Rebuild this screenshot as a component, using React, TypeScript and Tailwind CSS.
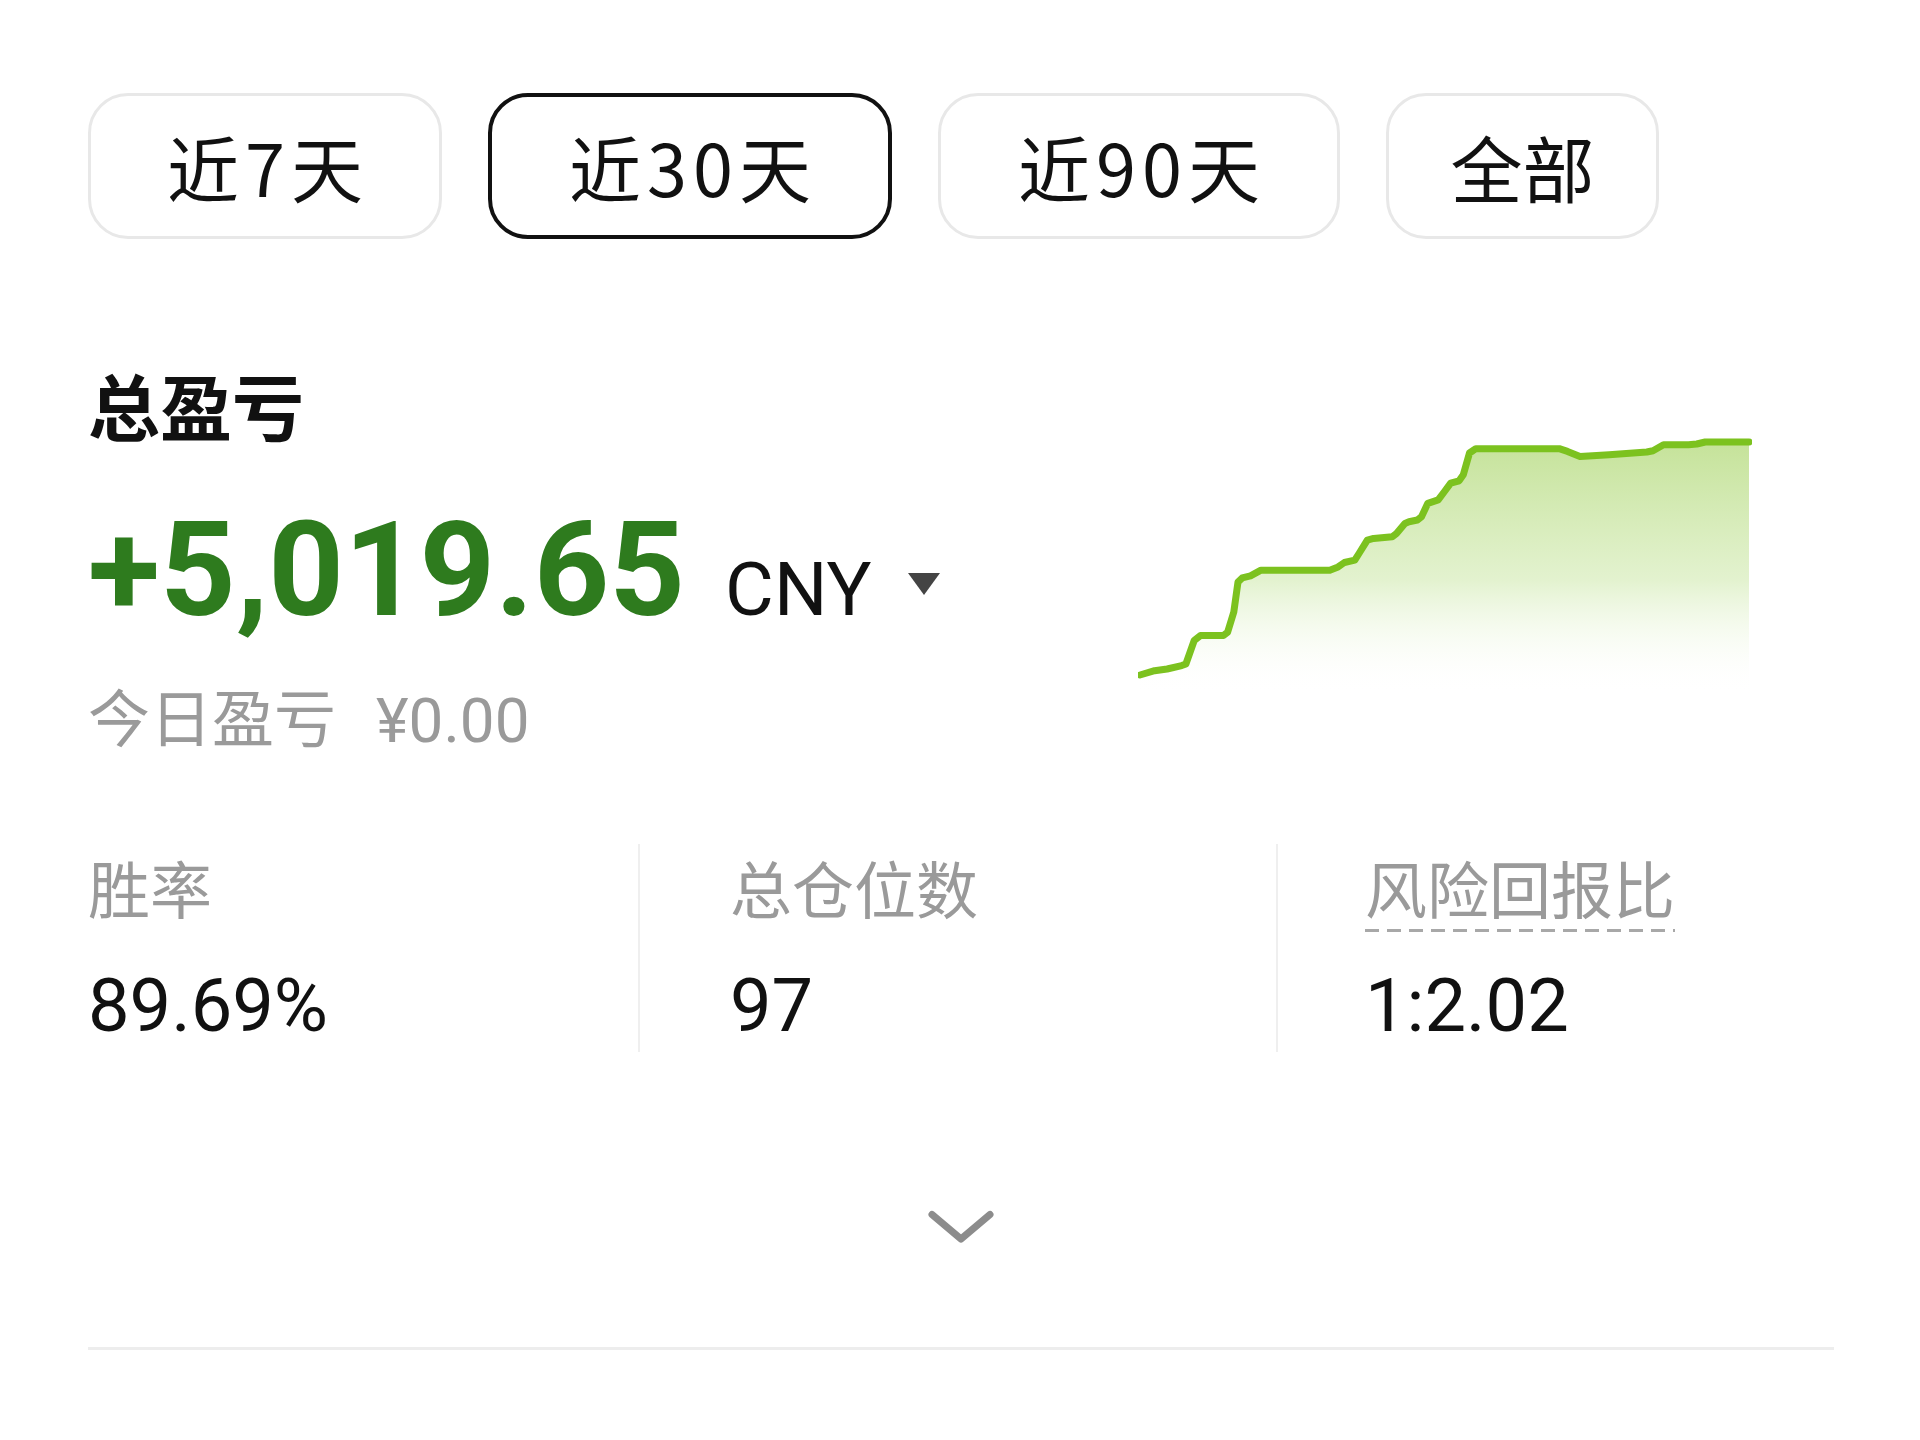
import React from "react";

const pts: [number, number][] = [
  [2, 239], [16.6, 234.7], [29.1, 233], [43.7, 229.6], [47.9, 228], [56.2, 204.5], [62.5, 199.5],
  [85.4, 199.5], [89.6, 196.2], [95.8, 176], [100, 146], [104.2, 141.9], [112.5, 139.9], [123, 134.2],
  [191.8, 134.2], [200.1, 130.9], [206.4, 126.5], [216.8, 124.2], [221, 117.5], [229.3, 104.1],
  [235.6, 102.4], [254.3, 100.7], [258.5, 97.4], [266.9, 87.4], [271, 85.7], [279.4, 84], [283.5, 80.7],
  [289.8, 67.3], [300.2, 63.9], [306.5, 55.5], [312.7, 47.2], [321.1, 44.8], [325.3, 38.8], [331.5, 17],
  [337.8, 12.7], [421.2, 12.7], [429.5, 15.4], [442, 20.4], [471.2, 18.7], [508.8, 16], [515, 14.7],
  [525.5, 8.7], [550.5, 8.7], [558.8, 8], [567.2, 6], [611, 6],
];

function Chart() {
  const line = pts.map((p, i) => `${i === 0 ? "M" : "L"}${p[0]} ${p[1]}`).join(" ");
  const area = `${line} L611 258 L2 258 Z`;
  return (
    <svg width="614" height="262" viewBox="0 0 614 262" className="mt-[68px] shrink-0">
      <defs>
        <linearGradient id="fillg" x1="0" y1="0" x2="0" y2="1">
          <stop offset="0" stopColor="#c2e194" stopOpacity="0.95" />
          <stop offset="0.55" stopColor="#dcefc3" stopOpacity="0.8" />
          <stop offset="1" stopColor="#ffffff" stopOpacity="0" />
        </linearGradient>
      </defs>
      <path d={area} fill="url(#fillg)" />
      <path d={line} fill="none" stroke="#7cc21f" strokeWidth="7" strokeLinejoin="round" strokeLinecap="round" />
    </svg>
  );
}

export default function App() {
  const cjk = "font-['Noto_Sans_CJK_SC',sans-serif]";
  return (
    <div className="w-[1920px] h-[1440px] bg-white overflow-hidden">
      <div className="pl-[88px] pr-[86px] pt-[93px] font-['Roboto','Noto_Sans_CJK_SC',sans-serif]">
        <div className={`flex gap-[46px] ${cjk} text-[72px] leading-none text-[#111]`}>
          <div className="w-[354px] h-[146px] rounded-[40px] border-[3px] border-[#e8e8e8] flex items-center justify-center tracking-[6px] pl-[6px]">近7天</div>
          <div className="w-[404px] h-[146px] rounded-[40px] border-[4px] border-[#111] flex items-center justify-center tracking-[6px] pl-[6px]">近30天</div>
          <div className="w-[402px] h-[146px] rounded-[40px] border-[3px] border-[#e8e8e8] flex items-center justify-center tracking-[6px] pl-[6px]">近90天</div>
          <div className="w-[273px] h-[146px] rounded-[40px] border-[3px] border-[#e8e8e8] flex items-center justify-center">全部</div>
        </div>

        <div className="mt-[129px] flex">
          <div className="w-[1050px] shrink-0">
            <div className={`${cjk} font-bold text-[72px] leading-none text-[#111]`}>总盈亏</div>
            <div className="mt-[64px] flex items-baseline leading-none">
              <span className="font-['Roboto',sans-serif] font-bold text-[132px] text-[#2e7b1e]">+5,019.65</span>
              <span className="ml-[40px] font-['Roboto',sans-serif] text-[75px] text-[#111]">CNY</span>
              <svg width="34" height="43" viewBox="0 0 34 43" className="ml-[36px]">
                <path d="M1 1 L33 1 L17 23 Z" fill="#444" />
              </svg>
            </div>
            <div className="mt-[48px] flex items-baseline leading-none text-[62px] text-[#9a9a9a]">
              <span className={cjk}>今日盈亏</span>
              <span className="ml-[40px] font-['Roboto',sans-serif]">¥0.00</span>
            </div>
          </div>
          <Chart />
        </div>

        <div className="mt-[92px] flex">
          <div className="w-[550px] shrink-0 pt-[12px] pb-[9px]">
            <div className={`${cjk} text-[62px] leading-none text-[#9a9a9a]`}>胜率</div>
            <div className="mt-[51px] font-['Roboto',sans-serif] text-[74px] leading-none text-[#111]">89.69%</div>
          </div>
          <div className="w-[638px] shrink-0 border-l-2 border-[#efefef] pl-[90px] pt-[12px] pb-[9px]">
            <div className={`${cjk} text-[62px] leading-none text-[#9a9a9a]`}>总仓位数</div>
            <div className="mt-[51px] font-['Roboto',sans-serif] text-[74px] leading-none text-[#111]">97</div>
          </div>
          <div className="flex-1 border-l-2 border-[#efefef] pl-[87px] pt-[12px] pb-[9px]">
            <div className={`${cjk} text-[62px] leading-none text-[#9a9a9a]`}>
              <span className="relative inline-block">
                风险回报比
                <span className="absolute left-0 right-0 -bottom-[14px] h-[3px] bg-[repeating-linear-gradient(90deg,#a8a8a8_0_14px,transparent_14px_22px)]"></span>
              </span>
            </div>
            <div className="mt-[51px] font-['Roboto',sans-serif] text-[74px] leading-none text-[#111]">1:2.02</div>
          </div>
        </div>

        <div className="mt-[155px] flex justify-center">
          <svg width="70" height="40" viewBox="0 0 70 40">
            <path d="M6 7.5 L35 32 L64 7.5" fill="none" stroke="#8c8c8c" strokeWidth="7" strokeLinecap="round" strokeLinejoin="round" />
          </svg>
        </div>

        <div className="mt-[100px] h-[3px] bg-[#ededed]"></div>
      </div>
    </div>
  );
}
